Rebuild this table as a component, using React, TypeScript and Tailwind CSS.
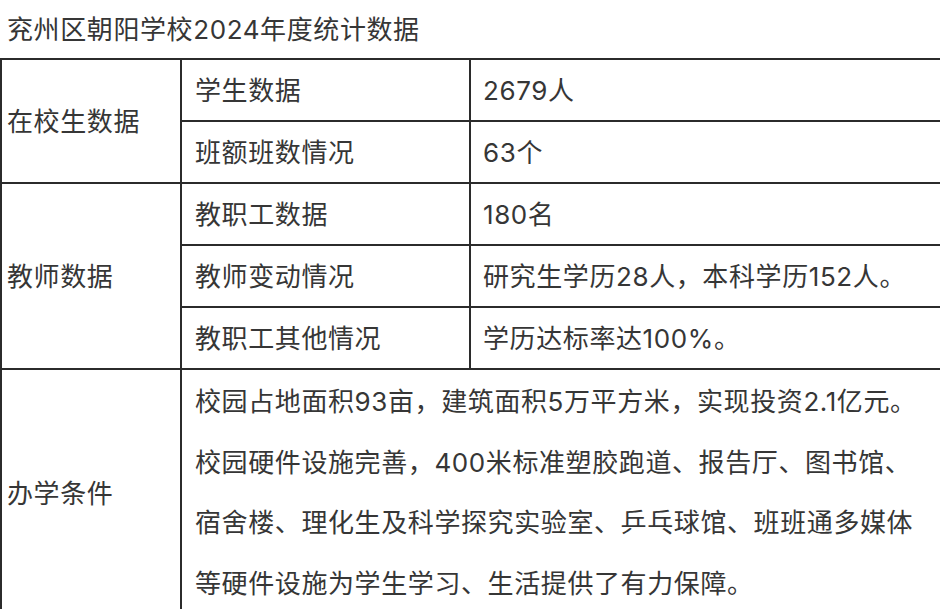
import React from "react";

const font = { fontFamily: 'Inter, "Noto Sans CJK SC", "Noto Sans", sans-serif' };

export default function App() {
  const lines = [
    "校园占地面积93亩，建筑面积5万平方米，实现投资2.1亿元。",
    "校园硬件设施完善，400米标准塑胶跑道、报告厅、图书馆、",
    "宿舍楼、理化生及科学探究实验室、乒乓球馆、班班通多媒体",
    "等硬件设施为学生学习、生活提供了有力保障。",
  ];
  const cell =
    "border-r-2 border-b-2 border-[#2b2b2b] flex items-center h-[62px] whitespace-nowrap";
  return (
    <div
      className="w-[940px] h-[609px] overflow-hidden bg-white text-[#363636] text-[26px] tracking-[0.6px]"
      style={font}
    >
      <div className="h-[58px] pl-[7px] pt-[1px] flex items-center whitespace-nowrap">
        兖州区朝阳学校2024年度统计数据
      </div>
      <div className="w-[944px] border-t-2 border-l-2 border-[#2b2b2b] grid grid-cols-[180px_289px_1fr]">
        <div className={`${cell} row-span-2 h-auto pl-[5px]`}>在校生数据</div>
        <div className={`${cell} pl-[13px]`}>学生数据</div>
        <div className={`${cell} pl-[12px]`}>2679人</div>
        <div className={`${cell} pl-[13px]`}>班额班数情况</div>
        <div className={`${cell} pl-[12px]`}>63个</div>

        <div className={`${cell} row-span-3 h-auto pl-[5px]`}>教师数据</div>
        <div className={`${cell} pl-[13px]`}>教职工数据</div>
        <div className={`${cell} pl-[12px]`}>180名</div>
        <div className={`${cell} pl-[13px]`}>教师变动情况</div>
        <div className={`${cell} pl-[12px]`}>研究生学历28人，本科学历152人。</div>
        <div className={`${cell} pl-[13px]`}>教职工其他情况</div>
        <div className={`${cell} pl-[12px]`}>学历达标率达100%。</div>

        <div className={`${cell} h-auto pl-[5px]`}>办学条件</div>
        <div className="col-span-2 border-r-2 border-b-2 border-[#2b2b2b] pl-[13px] pt-[2px] pb-[2px]">
          {lines.map((l) => (
            <div key={l} className="leading-[60.5px] whitespace-nowrap">
              {l}
            </div>
          ))}
        </div>
      </div>
    </div>
  );
}
